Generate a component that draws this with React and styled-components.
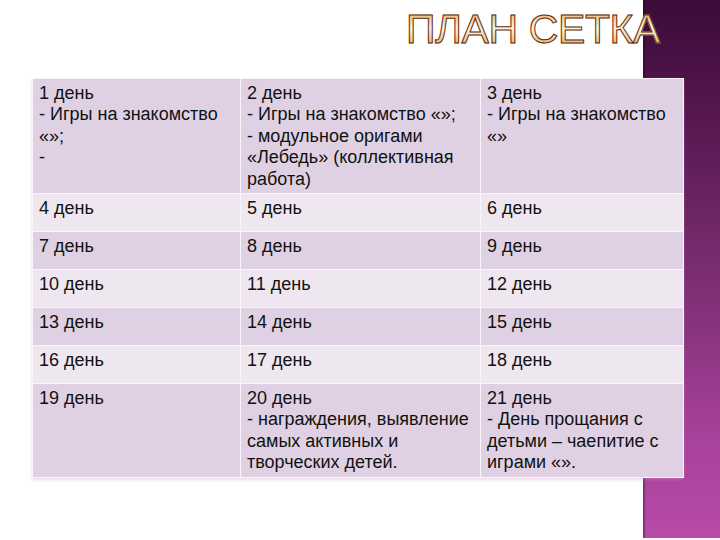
import React from "react";
import styled, { createGlobalStyle } from "styled-components";

const GlobalStyle = createGlobalStyle`
  html, body {
    margin: 0;
    padding: 0;
    background: #ffffff;
  }
  body {
    font-family: "Liberation Sans", Arial, sans-serif;
  }
`;

const rows = [
  [
    ["1 день", "- Игры на знакомство", "«»;", "-"],
    ["2 день", "- Игры на знакомство «»;", "- модульное оригами", "«Лебедь» (коллективная", "работа)"],
    ["3 день", "- Игры на знакомство", "«»"],
  ],
  [["4 день"], ["5 день"], ["6 день"]],
  [["7 день"], ["8 день"], ["9 день"]],
  [["10 день"], ["11 день"], ["12 день"]],
  [["13 день"], ["14 день"], ["15 день"]],
  [["16 день"], ["17 день"], ["18 день"]],
  [
    ["19 день"],
    ["20 день", "- награждения, выявление", "самых активных и", "творческих детей."],
    ["21 день", "- День прощания с", "детьми – чаепитие с", "играми «»."],
  ],
];

const App = () => {
  return (
    <>
      <GlobalStyle />
      <Slide>
        <Title>ПЛАН СЕТКА</Title>
        <Grid>
          <colgroup>
            <col style={{ width: 208 }} />
            <col style={{ width: 240 }} />
            <col style={{ width: 203 }} />
          </colgroup>
          <tbody>
            {rows.map((row, i) => (
              <Row key={i} $odd={i % 2 === 0}>
                {row.map((cell, j) => (
                  <Cell key={j}>
                    {cell.map((line, k) => (
                      <Line key={k}>{line}</Line>
                    ))}
                  </Cell>
                ))}
              </Row>
            ))}
          </tbody>
        </Grid>
      </Slide>
    </>
  );
};

const Slide = styled.div`
  width: 720px;
  height: 540px;
  overflow: hidden;
  box-sizing: border-box;
  padding-top: 8px;
  background:
    linear-gradient(90deg, rgba(30, 0, 30, 0.45), rgba(30, 0, 30, 0) 3px) 643px 0 / 77px 538px no-repeat,
    linear-gradient(180deg, #3c0b38 0%, #54164e 20%, #6c2664 40%, #8a3480 62%, #a8429a 82%, #b64ba8 100%) 643px 0 / 77px 538px no-repeat,
    #ffffff;
`;

const Title = styled.h1`
  margin: 0 0 28px 0;
  padding-right: 60px;
  text-align: right;
  font-family: "Liberation Sans", Arial, sans-serif;
  font-weight: 400;
  font-size: 41px;
  line-height: 42px;
  letter-spacing: -0.4px;
  color: transparent;
  background: linear-gradient(
    180deg,
    #e6a25e 0%,
    #f8d8ae 30%,
    #fff3e2 50%,
    #f9d6a6 68%,
    #e5934a 100%
  );
  -webkit-background-clip: text;
  background-clip: text;
  -webkit-text-stroke: 1px #5c2f14;
`;

const Grid = styled.table`
  margin-left: 32px;
  width: 651px;
  border-collapse: collapse;
  table-layout: fixed;
  box-shadow: 0 2px 3px rgba(200, 150, 190, 0.35);
`;

const Row = styled.tr`
  background: ${(p) => (p.$odd ? "#dfd1e3" : "#efe7f0")};
`;

const Cell = styled.td`
  vertical-align: top;
  height: 38px;
  box-sizing: border-box;
  padding: 4px 6px 3px 6px;
  border: 1px solid #fbf4fa;
  font-size: 18px;
  line-height: 21.4px;
  color: #111111;
`;

const Line = styled.div`
  white-space: nowrap;
`;

export default App;
